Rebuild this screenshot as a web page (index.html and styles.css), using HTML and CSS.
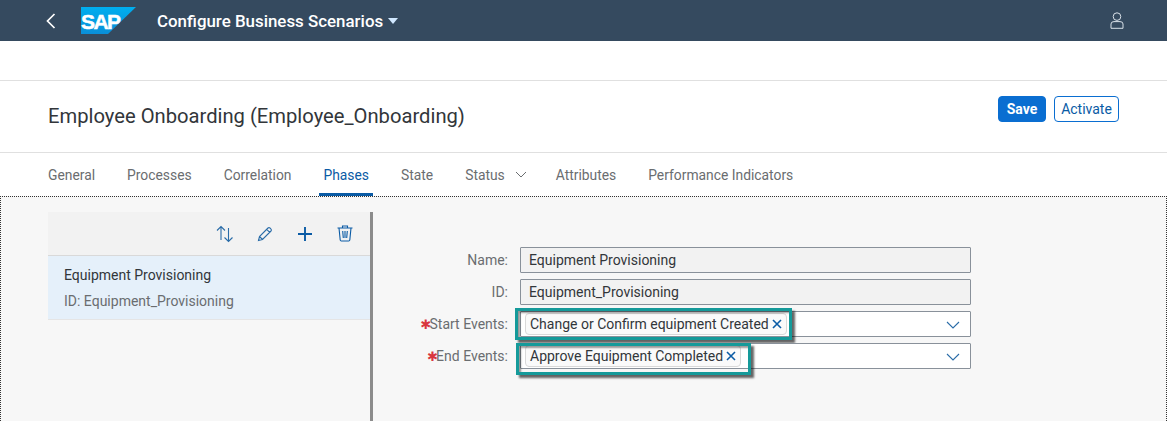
FILE: index.html
```html
<!DOCTYPE html>
<html>
    <head>
        <meta charset="utf-8">
        <title>Configure Business Scenarios</title>
        <link rel="stylesheet" href="styles.css">
    </head>
    <body>
        <div class="shell">
            <svg class="backIcon" width="12" height="18" viewBox="0 0 12 18"><path d="M9.5 2 L2.5 9 L9.5 16" fill="none" stroke="#fff" stroke-width="1.7"/></svg>
            <div class="logo">
                <svg width="55" height="27" viewBox="0 0 55 27"><defs><linearGradient id="sapBlue" x1="0" y1="0" x2="0" y2="1"><stop offset="0" stop-color="#00aeef"/><stop offset="1" stop-color="#0a8fd8"/></linearGradient></defs><polygon points="0,0 55,0 27,27 0,27" fill="url(#sapBlue)"/></svg>
                <span class="logoText">SAP</span>
            </div>
            <div class="appTitle">Configure Business Scenarios</div>
            <svg class="titleArrow" width="10" height="6" viewBox="0 0 10 6"><polygon points="0,0 10,0 5,6" fill="#d1e8ff"/></svg>
            <svg class="userIcon" width="14" height="17" viewBox="0 0 14 17"><circle cx="7" cy="4.6" r="3.8" fill="none" stroke="#d8e0e8" stroke-width="1"/><path d="M1 16.3 V12 Q1 9.6 4 9.6 H10 Q13 9.6 13 12 V16.3 Z" fill="none" stroke="#d8e0e8" stroke-width="1"/></svg>
        </div>

        <div class="band"></div>

        <div class="objHeader">
            <h1>Employee Onboarding (Employee_Onboarding)</h1>
            <div class="actions">
                <button class="btn btnSave">Save</button>
                <button class="btn btnGhost">Activate</button>
            </div>
        </div>

        <div class="tabs">
            <a class="tab">General</a>
            <a class="tab">Processes</a>
            <a class="tab">Correlation</a>
            <a class="tab tabActive">Phases</a>
            <a class="tab">State</a>
            <a class="tab">Status
                <svg class="tabArrow" width="12" height="7" viewBox="0 0 12 7"><path d="M1 1 L6 6 L11 1" fill="none" stroke="#6a6d70" stroke-width="1"/></svg>
            </a>
            <a class="tab">Attributes</a>
            <a class="tab">Performance Indicators</a>
        </div>

        <div class="content">
            <div class="master">
                <div class="toolbar">
                    <svg width="18" height="18" viewBox="0 0 18 18"><path d="M6 15 V1.5 M2 5.5 L6 1.5 L10 5.5 M13.5 3 V16.5 M9.5 12.5 L13.5 16.5 L17.5 12.5" fill="none" stroke="#2a6ca8" stroke-width="1.1"/></svg>
                    <svg width="16" height="16" viewBox="0 0 16 16"><path d="M1.5 14.5 L2.5 10.5 L11 2 Q12 1 13.2 2.2 L13.8 2.8 Q15 4 14 5 L5.5 13.5 Z M2.5 10.5 L5.5 13.5 M9.7 3.3 L12.7 6.3" fill="none" stroke="#2a6ca8" stroke-width="1.1"/></svg>
                    <svg width="16" height="16" viewBox="0 0 16 16"><path d="M8 1 V15 M1 8 H15" fill="none" stroke="#0a5ba5" stroke-width="1.9"/></svg>
                    <svg width="16" height="17" viewBox="0 0 16 17"><path d="M0.5 3 H15.5 M5.5 3 V1 H10.5 V3 M2 3 L3.2 15 Q3.3 16 4.3 16 H11.7 Q12.7 16 12.8 15 L14 3 M5.7 6 L6.3 13 M8 6 V13 M10.3 6 L9.7 13" fill="none" stroke="#0a5ba5" stroke-width="1.1"/></svg>
                </div>
                <div class="listItem">
                    <div class="itemTitle">Equipment Provisioning</div>
                    <div class="itemSub">ID: Equipment_Provisioning</div>
                </div>
            </div>

            <div class="form">
                <div class="row">
                    <label class="lbl">Name:</label>
                    <div class="field fieldRead">Equipment Provisioning</div>
                </div>
                <div class="row">
                    <label class="lbl">ID:</label>
                    <div class="field fieldRead">Equipment_Provisioning</div>
                </div>
                <div class="row">
                    <label class="lbl"><span class="req">&#10033;</span>Start Events:</label>
                    <div class="field fieldCombo">
                        <span class="token">Change or Confirm equipment Created<svg class="tokenX" width="10" height="10" viewBox="0 0 10 10"><path d="M1 1 L9 9 M9 1 L1 9" stroke="#0a5ba5" stroke-width="1.6"/></svg></span>
                        <svg class="comboArrow" width="14" height="8" viewBox="0 0 14 8"><path d="M1 1 L7 7 L13 1" fill="none" stroke="#2a6ca8" stroke-width="1.1"/></svg>
                        <div class="callout calloutStart"></div>
                    </div>
                </div>
                <div class="row">
                    <label class="lbl"><span class="req">&#10033;</span>End Events:</label>
                    <div class="field fieldCombo">
                        <span class="token">Approve Equipment Completed<svg class="tokenX" width="10" height="10" viewBox="0 0 10 10"><path d="M1 1 L9 9 M9 1 L1 9" stroke="#0a5ba5" stroke-width="1.6"/></svg></span>
                        <svg class="comboArrow" width="14" height="8" viewBox="0 0 14 8"><path d="M1 1 L7 7 L13 1" fill="none" stroke="#2a6ca8" stroke-width="1.1"/></svg>
                        <div class="callout calloutEnd"></div>
                    </div>
                </div>
            </div>
        </div>
    </body>
</html>
```

FILE: styles.css
```css
html,body{
    margin:0px;
    padding:0px;
    height:100%;
    overflow:hidden;
}
body{
    display:flex;
    flex-direction:column;
    background:white;
    font-family:Roboto,"Noto Sans",sans-serif;
    font-size:14px;
    color:#32363a;
}
.shell{
    display:flex;
    align-items:center;
    height:41px;
    flex:none;
    background:#354a5f;
    color:white;
}
.backIcon{
    margin-left:45px;
}
.logo{
    position:relative;
    width:55px;
    height:27px;
    margin-left:24px;
    margin-top:-1px;
}
.logo svg{
    display:block;
}
.logoText{
    position:absolute;
    left:0px;
    top:3px;
    font-family:"Liberation Sans",sans-serif;
    font-weight:bold;
    font-size:21px;
    line-height:24px;
    letter-spacing:-1.6px;
    -webkit-text-stroke:0.5px white;
    color:white;
}
.appTitle{
    margin-left:21px;
    font-size:16.9px;
    font-weight:500;
}
.titleArrow{
    margin-left:5px;
}
.userIcon{
    margin-left:auto;
    margin-right:43px;
}
.band{
    height:39px;
    flex:none;
    border-bottom:1px solid #e0e0e0;
}
.objHeader{
    display:flex;
    justify-content:space-between;
    height:71px;
    flex:none;
    padding:0px 48px;
    border-bottom:1px solid #e0e0e0;
}
.objHeader h1{
    margin:23px 0px 0px;
    font-size:20.2px;
    line-height:24px;
    font-weight:400;
}
.actions{
    display:flex;
    gap:8px;
    margin-top:15px;
    align-items:flex-start;
}
.btn{
    height:26px;
    padding:0px;
    border-radius:4px;
    font-family:inherit;
    font-size:14px;
}
.btnSave{
    width:48px;
    background:#0a6ed1;
    border:1px solid #0a6ed1;
    color:white;
    font-weight:700;
}
.btnGhost{
    width:65px;
    background:white;
    border:1px solid #0a6ed1;
    color:#0a5ba5;
}
.tabs{
    display:flex;
    gap:32px;
    height:43px;
    flex:none;
    padding:0px 48px;
    box-sizing:border-box;
    font-size:13.85px;
}
.tab{
    display:flex;
    align-items:center;
    height:43px;
    box-sizing:border-box;
    color:#6a6d70;
}
.tabActive{
    color:#0a5ba5;
    border-bottom:3px solid #0a5ba5;
    padding-top:3px;
    margin:0px -4px;
    padding-left:4px;
    padding-right:4px;
}
.tabArrow{
    margin-left:10px;
    margin-right:-3px;
}
.content{
    flex:1;
    display:flex;
    background:#f7f7f7;
    border:1px dotted #333;
    border-bottom:none;
    padding:15px 0px 0px 47px;
}
.master{
    width:322px;
    flex:none;
    border-right:3px solid #8c8c8c;
}
.toolbar{
    display:flex;
    justify-content:flex-end;
    align-items:center;
    gap:24px;
    height:43px;
    padding-right:17px;
    background:#f2f2f2;
    border-bottom:1px solid #d9d9d9;
}
.listItem{
    height:64px;
    box-sizing:border-box;
    padding:9px 16px 0px;
    background:#e5f0fa;
    border-bottom:1px solid #e5e5e5;
}
.itemTitle{
    line-height:20px;
}
.itemSub{
    margin-top:6px;
    line-height:20px;
    color:#6a6d70;
}
.form{
    display:flex;
    flex-direction:column;
    gap:6px;
    margin-top:35px;
}
.row{
    display:flex;
    align-items:center;
    height:26px;
}
.lbl{
    width:135px;
    text-align:right;
    color:#6a6d70;
    margin-right:12px;
}
.req{
    font-family:"DejaVu Sans",sans-serif;
    color:#d9363e;
    font-size:13px;
    line-height:14px;
    margin-right:-2px;
}
.field{
    position:relative;
    display:flex;
    align-items:center;
    width:451px;
    height:26px;
    box-sizing:border-box;
    padding:0px 8px;
    border:1px solid #89919a;
    border-radius:1px;
}
.fieldRead{
    background:#f2f2f2;
}
.fieldCombo{
    padding-left:4px;
    background:white;
}
.token{
    display:flex;
    align-items:center;
    height:20px;
    padding:0px 4px;
    border:1px solid #d9d9d9;
    border-radius:4px;
    background:#fafafa;
}
.tokenX{
    margin-left:3px;
}
.comboArrow{
    position:absolute;
    right:10px;
    top:9px;
}
.callout{
    position:absolute;
    box-sizing:border-box;
    border:3px solid #159a9a;
    box-shadow:3px 3px 2px rgba(0,0,0,0.6), inset 2px 2px 2px rgba(0,0,0,0.4);
}
.calloutStart{
    left:-6px;
    top:-4px;
    width:277px;
    height:32px;
}
.calloutEnd{
    left:-5px;
    top:-1px;
    width:235px;
    height:32px;
}
```
